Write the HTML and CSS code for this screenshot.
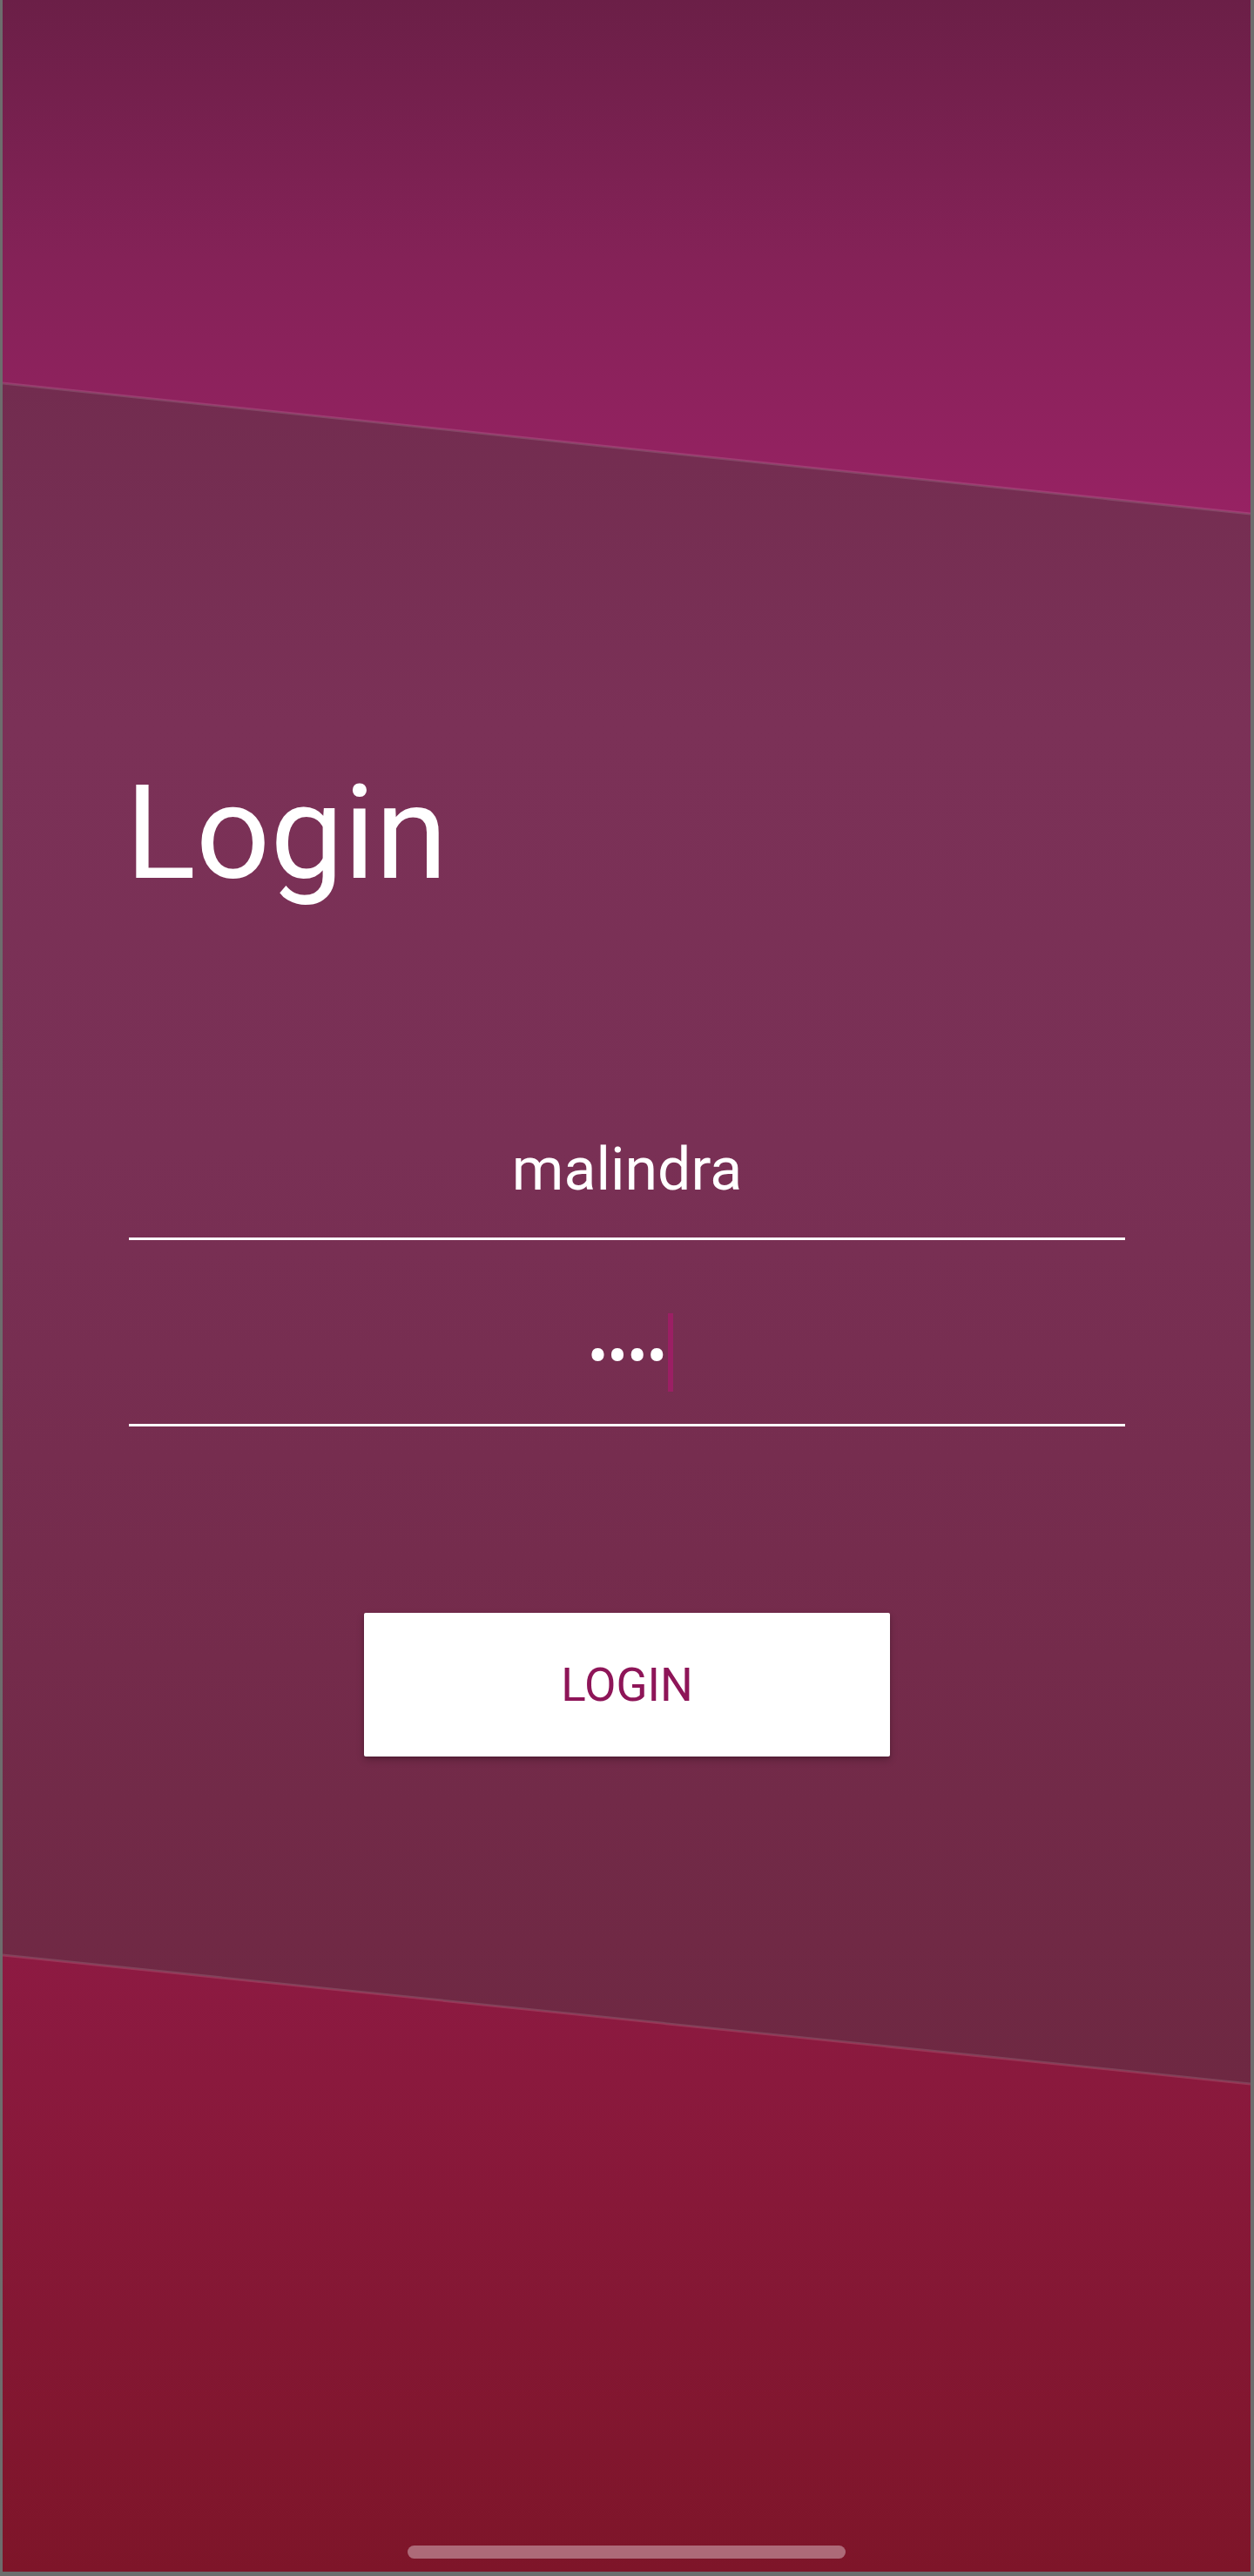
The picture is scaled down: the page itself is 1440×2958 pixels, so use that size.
FILE: index.html
```html
<!DOCTYPE html>
<html lang="en">
<head>
<meta charset="utf-8">
<title>Login</title>
<link rel="stylesheet" href="styles.css">
</head>
<body>
<div class="screen">
  <svg class="backdrop" viewBox="0 0 1433 2953" preserveAspectRatio="none" aria-hidden="true">
    <defs>
      <linearGradient id="gTop" gradientUnits="userSpaceOnUse" x1="0" y1="0" x2="0" y2="590">
        <stop offset="0" stop-color="#6b1f47"/>
        <stop offset="0.5" stop-color="#842257"/>
        <stop offset="1" stop-color="#972263"/>
      </linearGradient>
      <linearGradient id="gMid" gradientUnits="userSpaceOnUse" x1="0" y1="440" x2="0" y2="2393">
        <stop offset="0" stop-color="#722c4f"/>
        <stop offset="0.2" stop-color="#7b3157"/>
        <stop offset="0.45" stop-color="#793055"/>
        <stop offset="0.75" stop-color="#742b4b"/>
        <stop offset="1" stop-color="#6e2842"/>
      </linearGradient>
      <linearGradient id="gBot" gradientUnits="userSpaceOnUse" x1="0" y1="2245" x2="0" y2="2953">
        <stop offset="0" stop-color="#8d1a42"/>
        <stop offset="1" stop-color="#7e1529"/>
      </linearGradient>
    </defs>
    <rect x="0" y="0" width="1433" height="2953" fill="url(#gMid)"/>
    <polygon points="0,0 1433,0 1433,590 0,440" fill="url(#gTop)"/>
    <polygon points="0,2245 1433,2393 1433,2953 0,2953" fill="url(#gBot)"/>
    <line x1="0" y1="440" x2="1433" y2="590" stroke="rgba(255,255,255,0.12)" stroke-width="3"/>
    <line x1="0" y1="2245" x2="1433" y2="2393" stroke="rgba(255,255,255,0.12)" stroke-width="3"/>
  </svg>

  <main class="content">
    <h1 class="title">Login</h1>
    <div class="field">
      <span class="field-text">malindra</span>
    </div>
    <div class="field">
      <span class="field-text dots">&#8226;&#8226;&#8226;&#8226;</span><span class="caret"></span>
    </div>
    <button class="login-btn" type="button">LOGIN</button>
  </main>

  <div class="home-indicator"></div>
</div>
</body>
</html>
```

FILE: styles.css
```css
html, body {
  margin: 0;
  padding: 0;
}

body {
  background: #6d6d6d;
  width: 1440px;
  min-height: 2958px;
  font-family: Roboto, "Noto Sans", "Liberation Sans", sans-serif;
}

.screen {
  position: relative;
  margin: 0 4px 0 3px;
  height: 2953px;
  overflow: hidden;
}

.backdrop {
  position: absolute;
  top: 0;
  left: 0;
  width: 100%;
  height: 100%;
  display: block;
}

.content {
  position: relative;
  z-index: 1;
  display: flex;
  flex-direction: column;
  padding: 867px 144px 0 145px;
}

.title {
  margin: 0 0 163px -4px;
  font-size: 150px;
  line-height: 180px;
  font-weight: 400;
  color: #ffffff;
}

.field {
  display: flex;
  justify-content: center;
  align-items: flex-start;
  padding: 91px 0 36px;
  border-bottom: 3px solid #ffffff;
  color: #ffffff;
}

.field-text {
  font-size: 68px;
  line-height: 84px;
  height: 84px;
}

.dots {
  font-size: 70px;
  letter-spacing: -1px;
}

.caret {
  width: 6px;
  height: 90px;
  margin-top: -7px;
  margin-left: 2px;
  margin-right: -8px;
  background: #9b1f64;
}

.login-btn {
  align-self: center;
  margin-top: 214px;
  width: 604px;
  height: 165px;
  border: none;
  border-radius: 2px;
  background: #ffffff;
  color: #8e1558;
  font-family: Roboto, "Noto Sans", "Liberation Sans", sans-serif;
  font-size: 53px;
  font-weight: 400;
  box-shadow: 0 4px 8px rgba(0, 0, 0, 0.22), 0 1px 3px rgba(0, 0, 0, 0.18);
  padding: 0;
}

.home-indicator {
  position: absolute;
  left: 465px;
  bottom: 15px;
  width: 503px;
  height: 15px;
  border-radius: 8px;
  background: #ad6a78;
}
```
